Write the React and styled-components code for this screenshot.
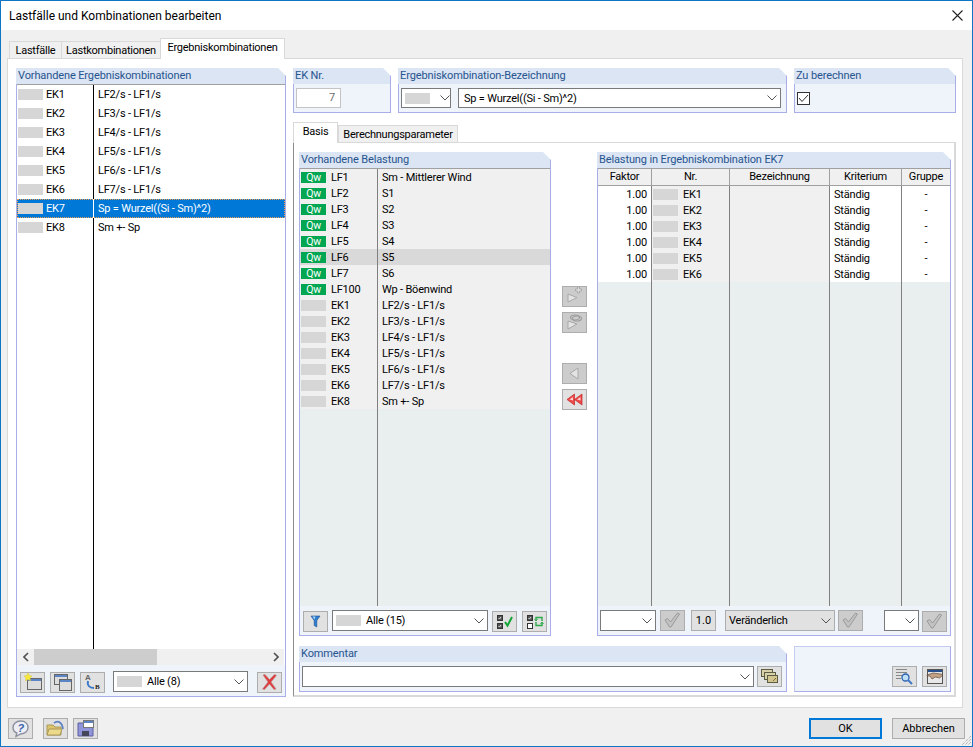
import React from "react";
import styled, { createGlobalStyle } from "styled-components";

const Global = createGlobalStyle`
  html, body { margin: 0; padding: 0; background: #fff; }
  * { box-sizing: border-box; }
  body { font-family: Roboto, "Liberation Sans", sans-serif; font-size: 11px; letter-spacing: -0.2px; color: #000; }
`;

const Window = styled.div`
  position: relative; width: 973px; height: 747px; border: 1px solid #0f75c5;
  display: flex; flex-direction: column; background: #f0f0f0; overflow: hidden;
`;
const TitleBar = styled.header`
  height: 29px; flex: none; background: #fff; display: flex; align-items: center; justify-content: space-between;
  padding: 0 9px 0 8px; font-size: 12px; letter-spacing: 0;
`;
const Body = styled.main`flex: 1; display: flex; flex-direction: column; padding: 9px 9px 0 6px; min-height: 0;`;
const TabRow = styled.nav`display: flex; align-items: flex-end; height: 20px; padding-left: 2px; flex: none; position: relative; z-index: 1; margin-bottom: -1px;`;
const Tab = styled.div`
  height: ${p => p.$active ? 21 : 18}px; padding: ${p => p.$active ? "0 0 3px" : "0"}; width: ${p => p.$w}px; flex: none; letter-spacing: -0.25px;
  display: flex; align-items: center; justify-content: center; white-space: nowrap;
  border: 1px solid #d9d9d9; border-bottom: ${p => p.$active ? "none" : "1px solid #d9d9d9"}; border-right: ${p => p.$active || p.$last ? "1px solid #d9d9d9" : "none"};
  background: ${p => p.$active ? "#fff" : "#f0f0f0"};
`;
const MainPanel = styled.div`
  height: 650px; flex: none; background: #fff; border: 1px solid #d9d9d9; padding: 9px 6px 10px 8px; display: flex; gap: 7px;
`;
const Group = styled.section`display: flex; flex-direction: column; flex: ${p => p.$fill ? "1" : "none"}; width: ${p => p.$w ? p.$w + "px" : "auto"}; min-width: 0;`;
const GroupHead = styled.h3`
  margin: 0; height: 16px; flex: none; font-size: 11px; font-weight: 400; line-height: 16px; color: #27548f; padding-left: 2px; letter-spacing: -0.12px; white-space: nowrap;
  background: linear-gradient(to left, #a9aee8 1px, #dbe5f3 1px);
  clip-path: polygon(0 0, calc(100% - 8px) 0, 100% 8px, 100% 100%, 0 100%);
`;
const GroupBody = styled.div`
  flex: 1; min-height: 0; display: flex; flex-direction: column; background: #eff3fa;
  border: 1px solid #a9aee8; border-top: none;
`;
const FieldRow = styled.div`flex: 1; display: flex; gap: ${p => p.$gap ?? 7}px; padding: 4px ${p => p.$pr ?? 5}px 0 2px; align-items: flex-start;`;
const ListBox = styled.div`flex: 1; min-height: 0; display: flex; flex-direction: column; border-top: ${p => p.$noTop ? "none" : "1px solid #a0a0a0"}; background: ${p => p.$bg || "#fff"}; margin-bottom: ${p => p.$gap ?? 2}px; overflow: hidden;`;
const ComboRow = styled.div`
  height: ${p => p.$h}px; flex: none; display: flex; align-items: center; white-space: nowrap; position: relative;
  background: ${p => p.$selected ? "#0078d7" : p.$hover ? "#d9d9d9" : "transparent"}; color: ${p => p.$selected ? "#fff" : "#000"};
  ${p => p.$selected ? "outline: 1px dotted #e8a050; outline-offset: -1px;" : ""}
`;
const KeyCell = styled.div`
  width: ${p => p.$w}px; height: 100%; flex: none; display: flex; align-items: center; gap: ${p => p.$gap}px; padding-left: 1px;
  border-right: 1px solid ${p => p.$line};
`;
const NameCell = styled.div`padding-left: 4px;`;
const Pill = styled.span`display: block; width: 25px; height: 11px; flex: none; background: #d6d6d6;`;
const Badge = styled.span`display: flex; align-items: center; justify-content: center; width: 25px; height: 11px; flex: none; background: #00a651; color: #fff; font-size: 10.5px; line-height: 11px;`;
const Filler = styled.div`flex: 1; min-height: 0; background: ${p => p.$bg || "transparent"};`;
const FillerCol = styled.div`width: ${p => p.$w}px; height: 100%; border-right: 1px solid ${p => p.$line};`;
const ScrollBar = styled.div`height: 16px; flex: none; display: flex; align-items: center; background: #f0f0f0; margin-right: 1px;`;
const ScrollEnd = styled.div`width: 17px; height: 16px; display: flex; align-items: center; justify-content: center; flex: none;`;
const ScrollThumb = styled.div`width: 123px; height: 16px; background: #cdcdcd;`;
const ScrollTrack = styled.div`flex: 1;`;
const Toolbar = styled.div`height: ${p => p.$h}px; flex: none; display: flex; align-items: flex-start; padding: ${p => p.$pt ?? 3}px 3px 0 ${p => p.$pl}px; background: #eff3fa;`;
const ToolButton = styled.button`
  width: 25px; height: 21px; flex: none; padding: 0; margin: ${p => p.$down ? 1 : 0}px ${p => p.$mr || 0}px 0 ${p => p.$ml || 0}px;
  border: 1px solid #adadad; background: ${p => p.$off ? "#cccccc" : "#e1e1e1"}; display: flex; align-items: center; justify-content: center; font: inherit;
`;
const Combo = styled.div`
  width: ${p => p.$w ? p.$w + "px" : "auto"}; flex: ${p => p.$w ? "none" : "1"}; height: ${p => p.$h || 21}px; margin: ${p => p.$m || "0"};
  border: 1px solid ${p => p.$grey ? "#adadad" : "#7a7a7a"}; background: ${p => p.$grey ? "#e1e1e1" : "#fff"};
  display: flex; align-items: center; padding: 0 ${p => p.$pr ?? 3}px 0 ${p => p.$pl ?? 3}px; gap: 5px; white-space: nowrap; color: #000;
`;
const ComboText = styled.span`flex: 1;`;
const NumberField = styled.div`width: 45px; height: 20px; border: 1px solid #c4c4c4; background: #fff; color: #6d6d6d; text-align: right; padding-right: 5px; line-height: 18px;`;
const CheckBox = styled.div`width: 13px; height: 13px; margin-top: 4px; border: 1px solid #333; background: #fff; display: flex; align-items: center; justify-content: center;`;
const SubTabs = styled.nav`height: 20px; flex: none; margin-top: 10px; display: flex; align-items: flex-end; position: relative; z-index: 1; margin-bottom: -1px;`;
const SubPanel = styled.div`
  flex: 1; min-height: 0; background: #fff; border: 1px solid #d9d9d9; border-left-color: #8c8c8c; border-bottom-width: 2px; border-right-width: 2px;
  padding: 9px 4px 4px 5px; display: flex; flex-direction: column; gap: 10px;
`;
const TransferRow = styled.div`flex: none; height: 484px; display: flex;`;
const MoveColumn = styled.div`width: 46px; flex: none; padding: 134px 0 0 11px; display: flex; flex-direction: column; gap: 5px;`;
const MoveGap = styled.div`height: 20px; flex: none;`;
const CommentRow = styled.div`flex: none; height: 46px; display: flex; gap: 7px;`;
const ActionBox = styled.div`width: 157px; flex: none; background: #eff3fa; border: 1px solid #c4cdf0; border-right-color: #a9aee8; border-bottom-color: #a9aee8; display: flex; justify-content: flex-end; align-items: flex-start; padding: 19px 3px 0 0; gap: 5px;`;
const TableGrid = styled.div`display: grid; grid-template-columns: 54px 78px 100px 72px 48px; flex: none; height: ${p => p.$h}px;`;
const HeadGrid = styled(TableGrid)`border-top: 1px solid #a0a0a0; border-bottom: 1px solid #a0a0a0; background: #f0f0f0;`;
const HeadCell = styled.div`display: flex; align-items: center; justify-content: center; border-right: 1px solid #a0a0a0; &:last-child { border-right: none; } padding-bottom: 1px;`;
const Cell = styled.div`
  display: flex; align-items: center; justify-content: ${p => p.$align || "flex-start"}; background: ${p => p.$grey ? "#f0f0f0" : "#fff"};
  padding: ${p => p.$pad || "0"}; gap: 5px; border-right: 1px solid #808080; &:last-child { border-right: none; }
`;
const FillerGrid = styled.div`flex: 1; min-height: 0; display: grid; grid-template-columns: 54px 78px 100px 72px 48px; background: #e9eeee;`;
const FillerCell = styled.div`border-right: 1px solid #808080; &:last-child { border-right: none; }`;
const Footer = styled.footer`flex: 1; display: flex; align-items: flex-start; padding-top: 10px; padding-left: 1px; margin-right: -2px;`;
const DialogButton = styled.button`
  width: 73px; height: 21px; margin-left: ${p => p.$ml || 0}px; padding: 0 0 1px; font: inherit; color: #000; background: #e1e1e1;
  border: ${p => p.$primary ? "2px solid #0078d7" : "1px solid #adadad"};
`;
const Spacer = styled.div`flex: 1;`;
const Grip = styled.svg`position: absolute; right: 0; bottom: 0; width: 13px; height: 13px;`;
const TopFields = styled.div`display: flex; gap: 7px; height: 45px; flex: none;`;

/* --- icons --- */
const Chev = ({ c = "#555" }) => (
  <svg width="10" height="6" viewBox="0 0 10 6" style={{ flex: "none" }}><path d="M.5.5 5 5 9.500.5" fill="none" stroke={c} /></svg>
);
const Ico = ({ children }) => <svg width="23" height="19" viewBox="0 0 23 19">{children}</svg>;
const Win = ({ x, y, w, h }) => (
  <g>
    <rect x={x + .5} y={y + .5} width={w} height={h} fill="#dcdcdc" stroke="#666" />
    <rect x={x + 1} y={y + 1} width={w - 1} height="2" fill="#5a84c4" />
  </g>
);
const NewIcon = () => <Ico><Win x={6} y={5} w={14} h={11} /><path d="M7 0l1.200 2.600L11 3 9 5l.5 2.800L7 6.500 4.500 7.800 5 5 3 3l2.800-.4z" fill="#f7e93c" stroke="#d8c830" strokeWidth=".5" /></Ico>;
const CopyIcon = () => <Ico><Win x={3} y={1} w={13} h={10} /><Win x={8} y={6} w={12} h={11} /></Ico>;
const RenameIcon = () => (
  <Ico>
    <text x="4" y="7" fontFamily="Liberation Sans" fontSize="8" fontWeight="700" fill="#666">A</text>
    <path d="M7 8c-1 4 1 7 6 7" fill="none" stroke="#3a78c8" strokeWidth="2" />
    <text x="14" y="16" fontFamily="Liberation Serif" fontSize="7" fontWeight="700" fill="#222">B</text>
  </Ico>
);
const DeleteIcon = () => <Ico><path d="M5 2l2-.5 4.500 5 5-5 2 1L13 9l5 7-2 .5-4.500-5.500-5 5.500-2-.5 5.500-7z" fill="#e23a3a" stroke="#b89090" strokeWidth=".7" /></Ico>;
const FilterIcon = () => <Ico><path d="M7 4h9l-3.200 4.500V15l-2.600-1.500v-5z" fill="#2f7fd0" stroke="#1b4d8f" strokeWidth=".6" /><path d="M8.500 4.500h3l-1 3z" fill="#a8d4f5" /></Ico>;
const MiniBox = ({ x, y, on }) => (
  <g>
    <rect x={x + .5} y={y + .5} width="5" height="5" fill={on ? "#555" : "#fff"} stroke="#333" />
    {on && <path d={`M${x + 1.500} ${y + 3}l1 1 1.500-2`} stroke="#ddd" fill="none" />}
  </g>
);
const CheckAllIcon = () => <Ico><MiniBox x={4} y={3} on /><MiniBox x={4} y={11} on /><path d="M12 10l2.500 3.500L19 5" fill="none" stroke="#12a536" strokeWidth="2" /></Ico>;
const ToggleIcon = () => (
  <Ico>
    <MiniBox x={4} y={3} on /><MiniBox x={4} y={11} />
    <path d="M13 8V5.500h6V9M13 10v3.500h6V11" fill="none" stroke="#2da84a" strokeWidth="1.400" />
    <path d="M11.500 7l1.500 2 1.500-2M17.500 12l1.500-2 1.500 2" fill="none" stroke="#2da84a" strokeWidth="1" />
  </Ico>
);
const GrayCheck = () => <Ico><path d="M4 9l2.500-1.500 3 3.500 7-9 2 1-8.500 13h-1.500z" fill="#c2c2c2" stroke="#8e8e8e" strokeWidth=".8" strokeLinejoin="round" /></Ico>;
const AddMove = () => <Ico><path d="M5 7l9 3.500L5 15z" fill="#e4e4e4" stroke="#a8a8a8" /><path d="M14.500 6V4h-2V2h2V0h2v2h2v2h-2v2z" fill="#dedede" stroke="#9e9e9e" strokeWidth=".7" /></Ico>;
const LinkMove = () => <Ico><path d="M5 8l9 3-9 5z" fill="#e4e4e4" stroke="#a8a8a8" /><ellipse cx="12" cy="4.500" rx="4.500" ry="2.500" fill="none" stroke="#9e9e9e" strokeWidth="1.200" /><ellipse cx="14" cy="5.500" rx="4.500" ry="2.500" fill="none" stroke="#9e9e9e" strokeWidth="1.200" /></Ico>;
const LeftIcon = () => <Ico><path d="M15 4v11L7 9.500z" fill="#e4e4e4" stroke="#a8a8a8" /></Ico>;
const RewindIcon = () => <Ico><path d="M11.500 4v11L4 9.500zM19 4v11l-7.500-5.500z" fill="#f04848" stroke="#c02828" strokeWidth=".7" /><path d="M10 7v3.500L6.500 9.500zM17.500 7v3.500L14 9.500z" fill="#fbd0d0" /></Ico>;
const LibraryIcon = () => (
  <Ico>
    <rect x="3.500" y="2.500" width="11" height="7" fill="#d8d0a8" stroke="#5c5c44" />
    <rect x="6.500" y="5.500" width="11" height="7" fill="#d8d0a8" stroke="#5c5c44" />
    <rect x="9.500" y="8.500" width="10" height="7" fill="#d3c58f" stroke="#5c5c44" />
    <path d="M15 14l3-3" stroke="#7a6a30" />
  </Ico>
);
const SearchIcon = () => (
  <Ico>
    <path d="M3 2.500h11M3 5.500h11M3 8.500h6M3 11.500h5" stroke="#888" />
    <circle cx="12.500" cy="10.500" r="3.500" fill="#bfe0f7" stroke="#2a62b0" strokeWidth="1.300" />
    <path d="M15 13l4 4" stroke="#3f78c8" strokeWidth="2" />
  </Ico>
);
const HandIcon = () => (
  <Ico>
    <rect x="4.500" y="2.500" width="15" height="14" fill="#e8e8e8" stroke="#555" />
    <rect x="5" y="3" width="14" height="2" fill="#24508f" />
    <path d="M4 8l6-2 8 1 2 1-3.500 3-4-1-3.500 2-2-3H4z" fill="#c2a284" stroke="#4d3826" strokeWidth=".6" />
  </Ico>
);
const HelpIcon = () => (
  <Ico>
    <path d="M11.500 2c5 0 7.500 3 7.500 6.500S16 15 11.500 15L7 17.500l.8-3.500C5 13 4 11 4 8.500 4 5 7 2 11.500 2z" fill="#eceef4" stroke="#8a8f9e" strokeWidth="1.400" />
    <text x="8.500" y="13" fontFamily="Liberation Sans" fontSize="11" fontWeight="700" fontStyle="italic" fill="#3a62a8">?</text>
  </Ico>
);
const FolderIcon = () => (
  <Ico>
    <path d="M3 6h6l2 2h6v8H3z" fill="#dcc468" stroke="#a8985c" />
    <path d="M3 16l2-6h13l-2 6z" fill="#ecd98a" stroke="#a8985c" />
    <path d="M10 4c4-3 8-1 9 6" fill="none" stroke="#5a80c0" strokeWidth="1.800" />
  </Ico>
);
const SaveIcon = () => (
  <Ico>
    <path d="M4 4h13l2 2v11H4z" fill="#9094da" stroke="#5c5f9c" />
    <rect x="8" y="12" width="7" height="5" fill="#45455c" />
    <rect x="9.500" y="1.500" width="10" height="7" fill="#fff" stroke="#777" />
    <rect x="10" y="2" width="9" height="2" fill="#5a84c4" />
  </Ico>
);

const leftRows = [
  ["EK1", "LF2/s - LF1/s"], ["EK2", "LF3/s - LF1/s"], ["EK3", "LF4/s - LF1/s"], ["EK4", "LF5/s - LF1/s"],
  ["EK5", "LF6/s - LF1/s"], ["EK6", "LF7/s - LF1/s"], ["EK7", "Sp = Wurzel((Si - Sm)^2)"], ["EK8", "Sm +- Sp"],
];
const loadRows = [
  ["LF1", "Sm - Mittlerer Wind", 1], ["LF2", "S1", 1], ["LF3", "S2", 1], ["LF4", "S3", 1], ["LF5", "S4", 1],
  ["LF6", "S5", 1], ["LF7", "S6", 1], ["LF100", "Wp - Böenwind", 1], ["EK1", "LF2/s - LF1/s"], ["EK2", "LF3/s - LF1/s"],
  ["EK3", "LF4/s - LF1/s"], ["EK4", "LF5/s - LF1/s"], ["EK5", "LF6/s - LF1/s"], ["EK6", "LF7/s - LF1/s"], ["EK8", "Sm +- Sp"],
];
const tableRows = ["EK1", "EK2", "EK3", "EK4", "EK5", "EK6"];
const tableHead = ["Faktor", "Nr.", "Bezeichnung", "Kriterium", "Gruppe"];

function TopRow() {
  return (
    <TopFields>
      <Group $w={98}>
        <GroupHead>EK Nr.</GroupHead>
        <GroupBody><FieldRow><NumberField>7</NumberField></FieldRow></GroupBody>
      </Group>
      <Group $w={389}>
        <GroupHead>Ergebniskombination-Bezeichnung</GroupHead>
        <GroupBody>
          <FieldRow>
            <Combo $w={50} $h={20} $pl={3} $pr={3}><Pill /><ComboText /><Chev /></Combo>
            <Combo $h={20} $pl={5}><ComboText>Sp = Wurzel((Si - Sm)^2)</ComboText><Chev /></Combo>
          </FieldRow>
        </GroupBody>
      </Group>
      <Group $w={162}>
        <GroupHead>Zu berechnen</GroupHead>
        <GroupBody>
          <FieldRow>
            <CheckBox><svg width="11" height="9" viewBox="0 0 11 9"><path d="M1 4l3 3.500L10 1" fill="none" stroke="#333" /></svg></CheckBox>
          </FieldRow>
        </GroupBody>
      </Group>
    </TopFields>
  );
}

export default function App() {
  return (
    <Window>
      <Global />
      <TitleBar>
        <span>Lastfälle und Kombinationen bearbeiten</span>
        <svg width="11" height="11" viewBox="0 0 11 11"><path d="M.5.5l10 10M10.500.5l-10 10" stroke="#222" strokeWidth="1.100" /></svg>
      </TitleBar>
      <Body>
        <TabRow>
          <Tab $w={52}>Lastfälle</Tab>
          <Tab $w={99}>Lastkombinationen</Tab>
          <Tab $w={125} $active>Ergebniskombinationen</Tab>
        </TabRow>
        <MainPanel>
          <Group $w={270}>
            <GroupHead>Vorhandene Ergebniskombinationen</GroupHead>
            <GroupBody>
              <ListBox>
                {leftRows.map(([k, n]) => (
                  <ComboRow key={k} $h={19} $selected={k === "EK7"}>
                    <KeyCell $w={77} $gap={3} $line={k === "EK7" ? "#fff" : "#000"}><Pill />{k}</KeyCell>
                    <NameCell>{n}</NameCell>
                  </ComboRow>
                ))}
                <Filler><FillerCol $w={77} $line="#000" /></Filler>
                <ScrollBar>
                  <ScrollEnd><svg width="6" height="10" viewBox="0 0 6 10"><path d="M5 1 1 5l4 4" fill="none" stroke="#505050" strokeWidth="1.600" /></svg></ScrollEnd>
                  <ScrollThumb />
                  <ScrollTrack />
                  <ScrollEnd><svg width="6" height="10" viewBox="0 0 6 10"><path d="M1 1l4 4-4 4" fill="none" stroke="#505050" strokeWidth="1.600" /></svg></ScrollEnd>
                </ScrollBar>
              </ListBox>
              <Toolbar $h={29} $pl={3} $pt={4}>
                <ToolButton $down $mr={5}><NewIcon /></ToolButton>
                <ToolButton $down $mr={5}><CopyIcon /></ToolButton>
                <ToolButton $down $mr={8}><RenameIcon /></ToolButton>
                <Combo $w={135} $m="0 9px 0 0"><Pill /><ComboText>Alle (8)</ComboText><Chev /></Combo>
                <ToolButton $down><DeleteIcon /></ToolButton>
              </Toolbar>
            </GroupBody>
          </Group>

          <Group $fill>
            <TopRow />
            <SubTabs>
              <Tab $w={45} $active>Basis</Tab>
              <Tab $w={120} $last>Berechnungsparameter</Tab>
            </SubTabs>
            <SubPanel>
              <TransferRow>
                <Group $w={252}>
                  <GroupHead>Vorhandene Belastung</GroupHead>
                  <GroupBody>
                    <ListBox $bg="#f0f0f0" $gap={1}>
                      {loadRows.map(([k, n, q]) => (
                        <ComboRow key={k} $h={16} $hover={k === "LF6"}>
                          <KeyCell $w={78} $gap={5} $line="#808080">{q ? <Badge>Qw</Badge> : <Pill />}{k}</KeyCell>
                          <NameCell>{n}</NameCell>
                        </ComboRow>
                      ))}
                      <Filler $bg="#e9eeee"><FillerCol $w={78} $line="#808080" /></Filler>
                    </ListBox>
                    <Toolbar $h={28} $pl={3}>
                      <ToolButton $down $mr={4}><FilterIcon /></ToolButton>
                      <Combo $w={156} $m="0 4px 0 0"><Pill /><ComboText>Alle (15)</ComboText><Chev /></Combo>
                      <ToolButton $down $mr={5}><CheckAllIcon /></ToolButton>
                      <ToolButton $down><ToggleIcon /></ToolButton>
                    </Toolbar>
                  </GroupBody>
                </Group>

                <MoveColumn>
                  <ToolButton $off><AddMove /></ToolButton>
                  <ToolButton $off><LinkMove /></ToolButton>
                  <MoveGap />
                  <ToolButton $off><LeftIcon /></ToolButton>
                  <ToolButton><RewindIcon /></ToolButton>
                </MoveColumn>

                <Group $w={354}>
                  <GroupHead>Belastung in Ergebniskombination EK7</GroupHead>
                  <GroupBody>
                    <ListBox $noTop $gap={1} $bg="#e9eeee">
                      <HeadGrid $h={18}>{tableHead.map(h => <HeadCell key={h}>{h}</HeadCell>)}</HeadGrid>
                      {tableRows.map(k => (
                        <TableGrid key={k} $h={16}>
                          <Cell $align="flex-end" $pad="0 4px 0 0">1.00</Cell>
                          <Cell $grey $pad="0 0 0 1px"><Pill />{k}</Cell>
                          <Cell $grey />
                          <Cell $pad="0 0 0 4px">Ständig</Cell>
                          <Cell $align="center">-</Cell>
                        </TableGrid>
                      ))}
                      <FillerGrid>{tableHead.map(h => <FillerCell key={h} />)}</FillerGrid>
                    </ListBox>
                    <Toolbar $h={28} $pl={2}>
                      <Combo $w={56} $m="0 4px 0 0"><ComboText /><Chev /></Combo>
                      <ToolButton $off $mr={6}><GrayCheck /></ToolButton>
                      <ToolButton $mr={9}>1.0</ToolButton>
                      <Combo $w={110} $grey $m="0 3px 0 0"><ComboText>Veränderlich</ComboText><Chev /></Combo>
                      <ToolButton $off $mr={21}><GrayCheck /></ToolButton>
                      <Combo $w={35} $m="0 3px 0 0"><ComboText /><Chev /></Combo>
                      <ToolButton $off $down><GrayCheck /></ToolButton>
                    </Toolbar>
                  </GroupBody>
                </Group>
              </TransferRow>

              <CommentRow>
                <Group $w={488}>
                  <GroupHead>Kommentar</GroupHead>
                  <GroupBody>
                    <FieldRow $gap={3} $pr={4}>
                      <Combo><ComboText /><Chev /></Combo>
                      <ToolButton><LibraryIcon /></ToolButton>
                    </FieldRow>
                  </GroupBody>
                </Group>
                <ActionBox>
                  <ToolButton><SearchIcon /></ToolButton>
                  <ToolButton><HandIcon /></ToolButton>
                </ActionBox>
              </CommentRow>
            </SubPanel>
          </Group>
        </MainPanel>
        <Footer>
          <ToolButton $mr={10}><HelpIcon /></ToolButton>
          <ToolButton $mr={5}><FolderIcon /></ToolButton>
          <ToolButton><SaveIcon /></ToolButton>
          <Spacer />
          <DialogButton $primary>OK</DialogButton>
          <DialogButton $ml={10}>Abbrechen</DialogButton>
        </Footer>
      </Body>
      <Grip viewBox="0 0 13 13"><path d="M12 3 3 12M12 6l-6 6M12 9l-3 3" stroke="#9a9a9a" strokeDasharray="1 1" /></Grip>
    </Window>
  );
}
